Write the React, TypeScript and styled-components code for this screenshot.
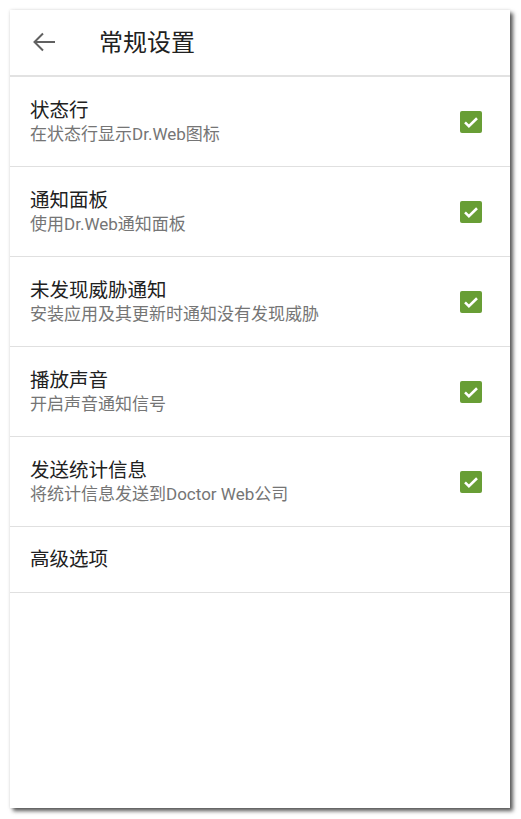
import React from "react";
import styled, { createGlobalStyle } from "styled-components";

const Global = createGlobalStyle`
  html, body { margin: 0; padding: 0; background: #ffffff; }
  body { font-family: Roboto, "Noto Sans CJK SC", sans-serif; }
`;

const Page = styled.div`
  padding: 10px 11px 11px 10px;
  width: 521px;
  height: 819px;
  box-sizing: border-box;
`;

const Screen = styled.div`
  width: 500px;
  height: 798px;
  background: #ffffff;
  display: flex;
  flex-direction: column;
  box-shadow: 0 0 3px rgba(0, 0, 0, 0.12), 3px 3px 4px rgba(0, 0, 0, 0.65);
`;

const Header = styled.header`
  height: 65px;
  flex: none;
  display: flex;
  align-items: center;
  border-bottom: 2px solid #e2e2e2;
`;

const BackButton = styled.div`
  width: 89px;
  display: flex;
  align-items: center;
  padding-left: 22px;
  padding-bottom: 2px;
  box-sizing: border-box;
`;

const Title = styled.h1`
  margin: 0 0 4px 0;
  font-size: 24px;
  font-weight: 400;
  color: #212121;
`;

const Row = styled.div<{ $tall?: boolean }>`
  height: ${(p) => (p.$tall ? 89 : 65)}px;
  flex: none;
  display: flex;
  align-items: center;
  padding: 0 28px 0 20px;
  border-bottom: 1px solid #e0e0e0;
`;

const Texts = styled.div`
  flex: 1;
  display: flex;
  flex-direction: column;
  gap: 1px;
`;

const RowTitle = styled.div`
  font-size: 19.5px;
  color: #212121;
  line-height: 24px;
`;

const RowSub = styled.div`
  font-size: 17px;
  color: #757575;
  line-height: 21px;
`;

const Check = styled.div`
  width: 22px;
  height: 22px;
  border-radius: 2px;
  background: #689e35;
  display: flex;
  align-items: center;
  justify-content: center;
`;

const items = [
  { t: "状态行", s: "在状态行显示Dr.Web图标" },
  { t: "通知面板", s: "使用Dr.Web通知面板" },
  { t: "未发现威胁通知", s: "安装应用及其更新时通知没有发现威胁" },
  { t: "播放声音", s: "开启声音通知信号" },
  { t: "发送统计信息", s: "将统计信息发送到Doctor Web公司" },
];

export default function App() {
  return (
    <>
      <Global />
      <Page>
        <Screen>
          <Header>
            <BackButton>
              <svg width="24" height="20" viewBox="0 0 24 20">
                <path d="M23 10H2.5M11 1.5L2.5 10l8.5 8.5" stroke="#616161" strokeWidth="2" fill="none" />
              </svg>
            </BackButton>
            <Title>常规设置</Title>
          </Header>
          {items.map((it) => (
            <Row key={it.t} $tall>
              <Texts>
                <RowTitle>{it.t}</RowTitle>
                <RowSub>{it.s}</RowSub>
              </Texts>
              <Check>
                <svg width="18" height="18" viewBox="0 0 24 24">
                  <path d="M4 12.5l5.2 5.2L20 7" stroke="#fff" strokeWidth="3.4" fill="none" />
                </svg>
              </Check>
            </Row>
          ))}
          <Row>
            <Texts>
              <RowTitle>高级选项</RowTitle>
            </Texts>
          </Row>
        </Screen>
      </Page>
    </>
  );
}
